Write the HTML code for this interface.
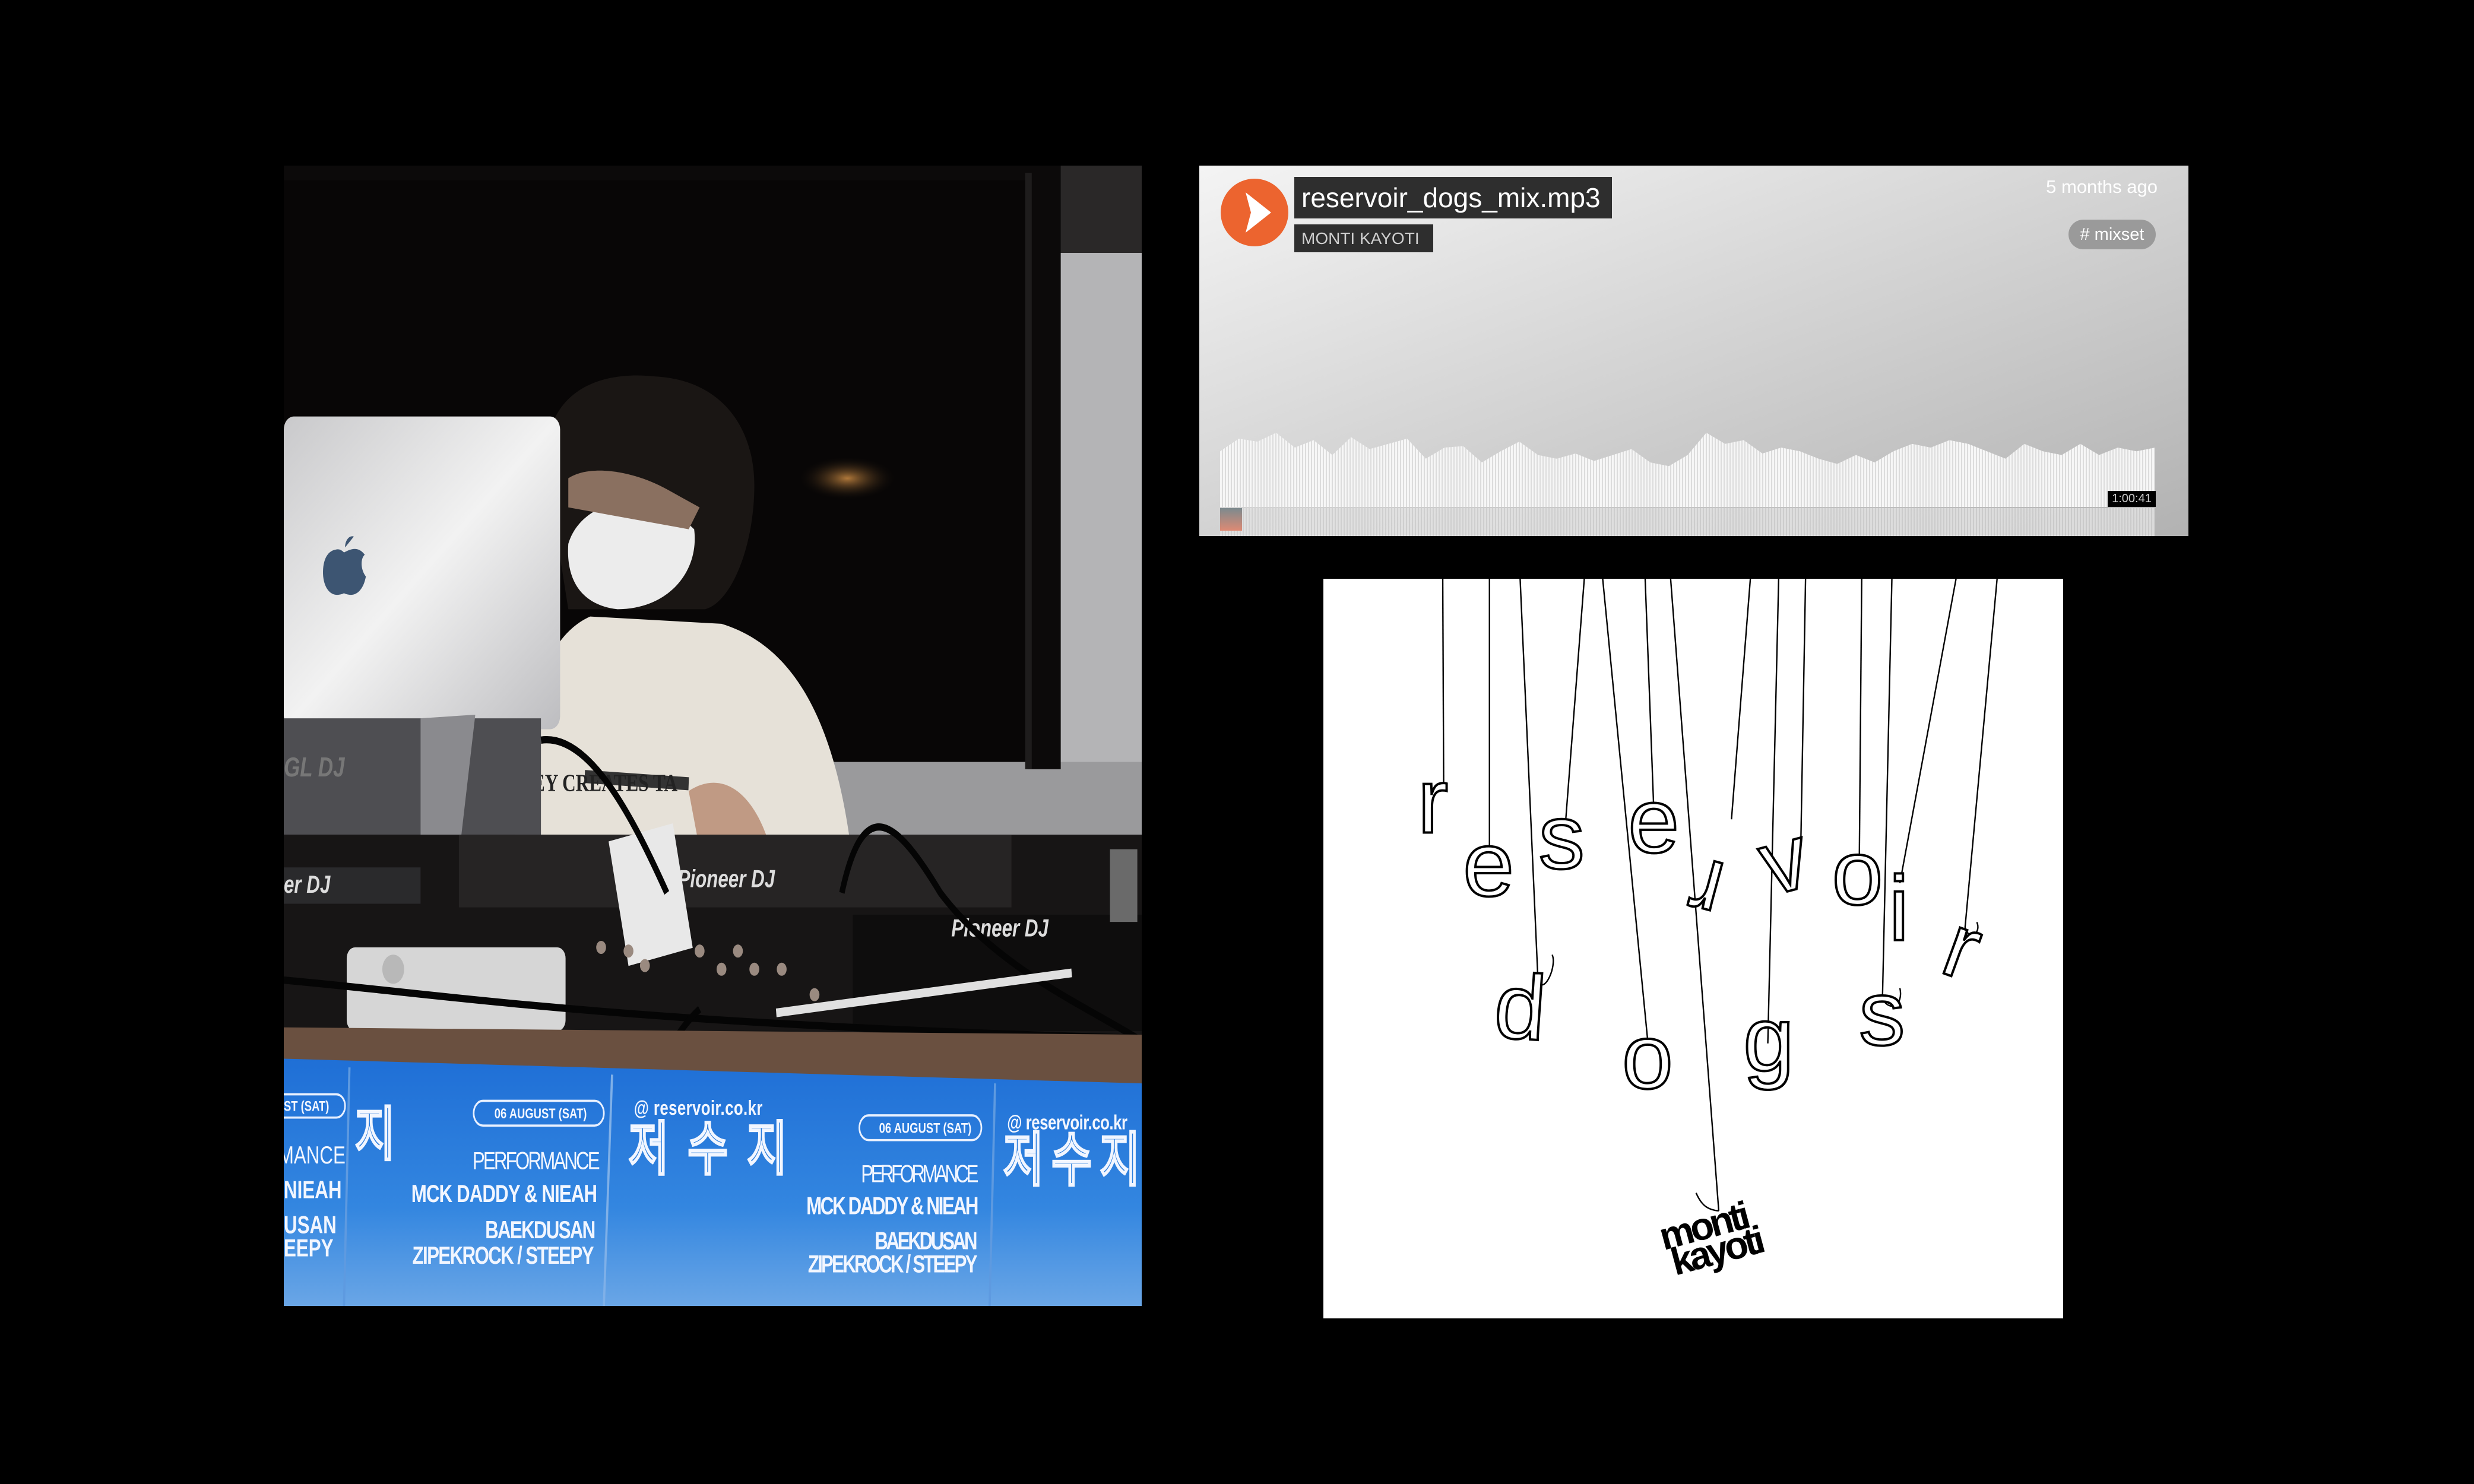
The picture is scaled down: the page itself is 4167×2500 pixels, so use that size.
<!DOCTYPE html>
<html><head><meta charset="utf-8"><style>
html,body{margin:0;padding:0;background:#000;width:4167px;height:2500px;overflow:hidden;font-family:"Liberation Sans","Noto Sans CJK KR",sans-serif}
.abs{position:absolute}
#widget{left:2020px;top:279px;width:1666px;height:624px;background:linear-gradient(160deg,#f4f4f4 0%,#d6d6d6 45%,#b2b2b2 100%);overflow:hidden}
.tb{position:absolute;background:#2e2e2e;color:#fff;white-space:nowrap}
</style></head><body>

<div id="photo" class="abs" style="left:478px;top:279px;width:1445px;height:1921px;overflow:hidden;background:#080606">
<svg width="1445" height="1921" viewBox="0 0 1568 1568" preserveAspectRatio="none">
<defs>
<linearGradient id="lap" x1="0" y1="0" x2="1" y2="1"><stop offset="0" stop-color="#c9c9cb"/><stop offset="0.5" stop-color="#f2f2f2"/><stop offset="1" stop-color="#bdbdc0"/></linearGradient>
<linearGradient id="blue" x1="0" y1="0" x2="0" y2="1"><stop offset="0" stop-color="#1f6fd6"/><stop offset="0.6" stop-color="#3386e0"/><stop offset="1" stop-color="#6aa6e6"/></linearGradient>
<radialGradient id="lamp" cx="0.5" cy="0.5" r="0.5"><stop offset="0" stop-color="#b0783a"/><stop offset="1" stop-color="#0a0808" stop-opacity="0"/></radialGradient>
</defs>
<rect width="1568" height="1568" fill="#080606"/>
<rect x="1380" y="0" width="188" height="130" fill="#2a2828"/>
<rect x="1370" y="120" width="198" height="940" fill="#b4b4b6"/>
<rect x="1000" y="820" width="568" height="240" fill="#9a9a9c"/>
<polygon points="0,0 1420,0 1420,830 1360,830 1360,20 0,20" fill="#0c0a0a"/>
<rect x="1355" y="10" width="12" height="820" fill="#1e1c1c"/>
<ellipse cx="1030" cy="430" rx="90" ry="30" fill="url(#lamp)"/>
<path d="M420,960 C430,760 470,650 560,620 L800,630 C930,660 1010,760 1040,960 Z" fill="#e6e1d8"/>
<path d="M480,420 C470,320 560,280 680,290 C800,295 860,360 860,440 C860,520 820,600 770,610 L520,610 Z" fill="#1a1614"/>
<path d="M520,520 C540,470 620,450 700,465 L750,500 C760,560 700,610 610,610 C550,605 515,575 520,520 Z" fill="#ececec"/>
<path d="M520,430 C560,410 640,420 700,445 L760,470 L740,500 L520,470 Z" fill="#8a7060"/>
<path d="M550,840 L740,850" stroke="#333" stroke-width="18"/>
<text x="430" y="860" font-size="34" font-weight="bold" fill="#222" font-family="Liberation Serif">NEY CREATES TA</text>
<path d="M740,860 C800,830 860,860 890,940 L760,940 Z" fill="#c09a84"/>
<rect x="0" y="345" width="505" height="430" rx="18" fill="url(#lap)"/>
<path d="M95,528 C78,530 70,545 72,565 C75,585 90,595 110,588 C130,595 145,585 150,565 C140,555 140,540 148,535 C135,522 120,528 110,532 C105,528 100,527 95,528 Z M112,525 C112,515 120,508 128,510" fill="#3d5572"/>
<polygon points="0,760 470,760 470,920 0,920" fill="#4e4e52"/>
<polygon points="250,760 350,755 300,1080 250,1080" fill="#8a8a8e"/>
<text x="0" y="840" font-size="38" fill="#777" font-style="italic" font-weight="bold">GL DJ</text>
<rect x="0" y="920" width="1568" height="290" fill="#171515"/>
<rect x="320" y="920" width="1010" height="100" fill="#262424"/>
<rect x="0" y="965" width="250" height="50" fill="#2a2a2c"/>
<text x="0" y="1000" font-size="34" fill="#ddd" font-style="italic" font-weight="bold">er DJ</text>
<text x="720" y="992" font-size="34" fill="#ddd" font-style="italic" font-weight="bold">Pioneer DJ</text>
<rect x="1040" y="1030" width="528" height="160" fill="#0e0d0d"/>
<text x="1220" y="1060" font-size="34" fill="#ddd" font-style="italic" font-weight="bold">Pioneer DJ</text>
<rect x="1510" y="940" width="50" height="100" fill="#6a6a6a"/>
<rect x="610" y="915" width="120" height="175" fill="#e8e8e8" transform="rotate(-12 670 1000)"/>
<g fill="#9a8a80"><circle cx="580" cy="1075" r="9"/><circle cx="630" cy="1080" r="9"/><circle cx="660" cy="1100" r="9"/><circle cx="760" cy="1080" r="9"/><circle cx="800" cy="1105" r="9"/><circle cx="830" cy="1080" r="9"/><circle cx="860" cy="1105" r="9"/><circle cx="910" cy="1105" r="9"/><circle cx="970" cy="1140" r="9"/></g>
<rect x="115" y="1075" width="400" height="115" rx="15" fill="#d6d6d6"/>
<circle cx="200" cy="1105" r="20" fill="#b8b8b8"/>
<g stroke="#050505" stroke-width="10" fill="none">
<path d="M0,1120 C300,1140 600,1180 1568,1200"/>
<path d="M470,790 C560,780 640,900 700,1000"/>
<path d="M1020,1000 C1060,860 1120,900 1200,1000 C1300,1100 1450,1150 1560,1200"/>
<path d="M280,1240 C290,1330 400,1340 560,1380 C650,1300 700,1200 760,1160"/>
</g>
<path d="M900,1165 L1440,1110" stroke="#e0e0e0" stroke-width="12"/>
<polygon points="0,1185 1568,1195 1568,1270 0,1240" fill="#6a5040"/>
<polygon points="0,1228 1568,1262 1568,1568 0,1568" fill="url(#blue)"/>
<line x1="120" y1="1240" x2="110" y2="1568" stroke="#5e9ae0" stroke-width="4"/>
<line x1="600" y1="1250" x2="585" y2="1568" stroke="#7fb0e8" stroke-width="4"/>
<line x1="1300" y1="1262" x2="1290" y2="1568" stroke="#5e9ae0" stroke-width="4"/>
<g fill="none" stroke="#e8f0ff" stroke-width="3">
<rect x="-30" y="1277" width="142" height="32" rx="16"/><rect x="347" y="1286" width="238" height="34" rx="17"/><rect x="1052" y="1306" width="223" height="34" rx="17"/>
</g>
<g fill="#f2f6ff" font-weight="bold" font-size="20">
<text x="0" y="1300">ST (SAT)</text><text x="385" y="1310">06 AUGUST (SAT)</text><text x="1088" y="1330">06 AUGUST (SAT)</text>
</g>
<g fill="#f2f6ff" font-size="34">
<text x="345" y="1380" textLength="233">PERFORMANCE</text><text x="1055" y="1398" textLength="215">PERFORMANCE</text><text x="-10" y="1372">MANCE</text>
</g>
<g fill="#f2f6ff" font-weight="bold" font-size="34">
<text x="233" y="1425" textLength="340">MCK DADDY &amp; NIEAH</text>
<text x="368" y="1475" textLength="202">BAEKDUSAN</text>
<text x="235" y="1510" textLength="332">ZIPEKROCK / STEEPY</text>
<text x="955" y="1442" textLength="315">MCK DADDY &amp; NIEAH</text>
<text x="1080" y="1490" textLength="188">BAEKDUSAN</text>
<text x="958" y="1522" textLength="310">ZIPEKROCK / STEEPY</text>
<text x="0" y="1420">NIEAH</text><text x="0" y="1468">USAN</text><text x="0" y="1500">EEPY</text>
<text x="640" y="1305" font-size="28" textLength="235">@ reservoir.co.kr</text>
<text x="1322" y="1325" font-size="28" textLength="220">@ reservoir.co.kr</text>
</g>
<g fill="none" stroke="#f2f6ff" stroke-width="5" font-size="80" font-family="Noto Sans CJK KR,sans-serif">
<text x="630" y="1380" textLength="290">저수지</text>
<text x="1315" y="1395" textLength="250">저수지</text>
<text x="130" y="1360">지</text>
</g>
</svg>
</div>

<div id="widget" class="abs">
<svg class="abs" style="left:35px;top:21px" width="116" height="116" viewBox="0 0 116 116">
<ellipse cx="58" cy="58" rx="57" ry="57" fill="#ec642f"/>
<path d="M43,24 L86,58 L43,92 L52,58 Z" fill="#fff"/>
</svg>
<div class="tb" style="left:160px;top:19px;width:535px;height:70px;font-size:46px;line-height:70px;padding-left:12px;box-sizing:border-box">reservoir_dogs_mix.mp3</div>
<div class="tb" style="left:160px;top:99px;width:234px;height:47px;font-size:28px;line-height:47px;padding-left:12px;box-sizing:border-box;color:#cfcfcf">MONTI KAYOTI</div>
<div class="abs" style="right:52px;top:18px;font-size:31px;color:#fff">5 months ago</div>
<div class="abs" style="left:1464px;top:91px;width:147px;height:50px;border-radius:25px;background:#9a9a9a;color:#fff;font-size:29px;line-height:50px;text-align:center"># mixset</div>
<div class="abs" style="left:35px;top:450px;width:1575px;height:125px;background:repeating-linear-gradient(90deg,#f6f6f6 0 3px,#dcdcdc 3px 5px);clip-path:polygon(0 25%,2% 8%,4% 12%,6% 0,8% 20%,10% 10%,12% 30%,14% 6%,16% 22%,18% 15%,20% 8%,22% 35%,24% 20%,26% 18%,28% 40%,30% 25%,32% 12%,34% 30%,36% 35%,38% 28%,40% 38%,42% 30%,44% 22%,46% 40%,48% 45%,50% 30%,52% 0,54% 15%,56% 10%,58% 28%,60% 20%,62% 25%,64% 35%,66% 42%,68% 30%,70% 40%,72% 25%,74% 15%,76% 20%,78% 10%,80% 15%,82% 25%,84% 35%,86% 15%,88% 25%,90% 30%,92% 15%,94% 30%,96% 20%,98% 25%,100% 20%,100% 100%,0 100%)"></div>
<div class="abs" style="left:35px;top:577px;width:1575px;height:47px;background:repeating-linear-gradient(90deg,#e4e4e4 0 3px,#cfcfcf 3px 5px);opacity:.8"></div>
<div class="abs" style="left:35px;top:577px;width:37px;height:38px;background:linear-gradient(180deg,#7c8a8e,#de8a74)"></div>
<div class="abs" style="left:1530px;top:548px;width:81px;height:27px;background:#000;color:#ccc;font-size:20px;line-height:27px;text-align:center">1:00:41</div>
</div>

<div id="album" class="abs" style="left:2229px;top:975px;width:1246px;height:1246px;background:#fff;overflow:hidden">
<svg width="1246" height="1246" viewBox="0 0 1568 1568">
<g stroke="#000" stroke-width="3" fill="none">
<line x1="253" y1="0" x2="255" y2="450"/><line x1="352" y1="0" x2="352" y2="580"/>
<line x1="417" y1="0" x2="455" y2="855"/><line x1="553" y1="0" x2="513" y2="520"/>
<line x1="592" y1="0" x2="688" y2="985"/><line x1="682" y1="0" x2="700" y2="482"/>
<line x1="736" y1="0" x2="838" y2="1340"/><line x1="905" y1="0" x2="865" y2="510"/>
<line x1="965" y1="0" x2="942" y2="985"/><line x1="1022" y1="0" x2="1012" y2="560"/>
<line x1="1141" y1="0" x2="1136" y2="590"/><line x1="1205" y1="0" x2="1185" y2="890"/>
<line x1="1341" y1="0" x2="1222" y2="645"/><line x1="1428" y1="0" x2="1360" y2="740"/>
<path d="M455,855 C470,880 495,820 485,797"/><path d="M1360,740 C1370,770 1395,750 1385,728"/>
<path d="M1185,890 C1200,920 1230,905 1222,868"/><path d="M790,1302 C800,1325 812,1338 838,1340"/>
</g>
<g fill="#fff" stroke="#000" stroke-width="5" font-family="Liberation Sans,sans-serif" font-size="195" text-anchor="middle">
<text x="232" y="538">r</text>
<text x="350" y="672">e</text>
<text x="505" y="614">s</text>
<text x="700" y="580">e</text>
<text x="840" y="500" transform="rotate(195 840 550)">r</text>
<text x="980" y="662" transform="rotate(-15 980 610)">v</text>
<text x="1132" y="690">o</text>
<text x="1220" y="766">i</text>
<text x="1350" y="846" transform="rotate(20 1350 795)">r</text>
<text x="418" y="975" transform="rotate(4 418 900)">d</text>
<text x="687" y="1080">o</text>
<text x="944" y="1043">g</text>
<text x="1184" y="988">s</text>
</g>
<g font-family="Liberation Sans,sans-serif" font-weight="bold" font-size="82" fill="#000" transform="rotate(-15 810 1400)" letter-spacing="-7">
<text x="718" y="1400">monti</text>
<text x="728" y="1458">kayoti</text>
</g>
</svg>
</div>
</body></html>
